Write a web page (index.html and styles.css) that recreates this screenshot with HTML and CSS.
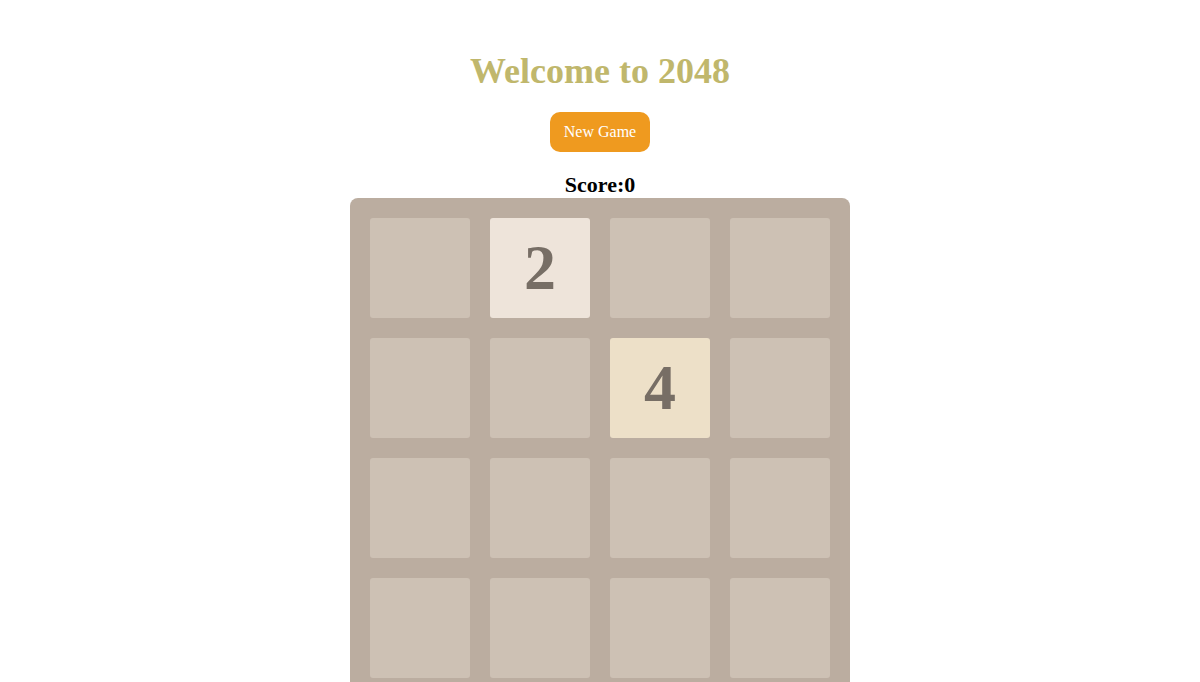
FILE: index.html
```html
<!DOCTYPE html>
<html>
<head>
<meta charset="utf-8">
<link rel="stylesheet" href="styles.css">
</head>
<body>
<div class="page">
  <h1 class="title">Welcome to 2048</h1>
  <button class="new-game">New Game</button>
  <div class="score">Score:0</div>
  <div class="board">
    <div class="cell"></div>
    <div class="cell t2">2</div>
    <div class="cell"></div>
    <div class="cell"></div>
    <div class="cell"></div>
    <div class="cell"></div>
    <div class="cell t4">4</div>
    <div class="cell"></div>
    <div class="cell"></div>
    <div class="cell"></div>
    <div class="cell"></div>
    <div class="cell"></div>
    <div class="cell"></div>
    <div class="cell"></div>
    <div class="cell"></div>
    <div class="cell"></div>
  </div>
</div>
</body>
</html>
```
FILE: styles.css
```css
html, body {
  margin: 0;
  padding: 0;
  background: #ffffff;
  font-family: "Liberation Serif", "Times New Roman", serif;
}
.page {
  display: flex;
  flex-direction: column;
  align-items: center;
  padding-top: 49px;
}
.title {
  margin: 0;
  font-size: 36px;
  line-height: 44px;
  font-weight: bold;
  color: #c0b76c;
}
.new-game {
  margin-top: 19px;
  width: 100px;
  height: 40px;
  border: none;
  border-radius: 10px;
  background: #ef9a1f;
  color: #ffffff;
  font-family: "Liberation Serif", "Times New Roman", serif;
  font-size: 16px;
  padding: 0;
}
.score {
  margin-top: 20px;
  font-size: 22px;
  line-height: 26px;
  font-weight: bold;
  color: #000;
}
.board {
  box-sizing: border-box;
  width: 500px;
  padding: 20px;
  background: #bbada0;
  border-radius: 8px;
  display: grid;
  grid-template-columns: repeat(4, 100px);
  grid-auto-rows: 100px;
  gap: 20px;
}
.cell {
  background: #cdc1b4;
  border-radius: 3px;
  display: flex;
  align-items: center;
  justify-content: center;
  font-size: 64px;
  font-weight: bold;
  color: #776e65;
}
.t2 { background: #eee4da; }
.t4 { background: #ede0c8; }
```
